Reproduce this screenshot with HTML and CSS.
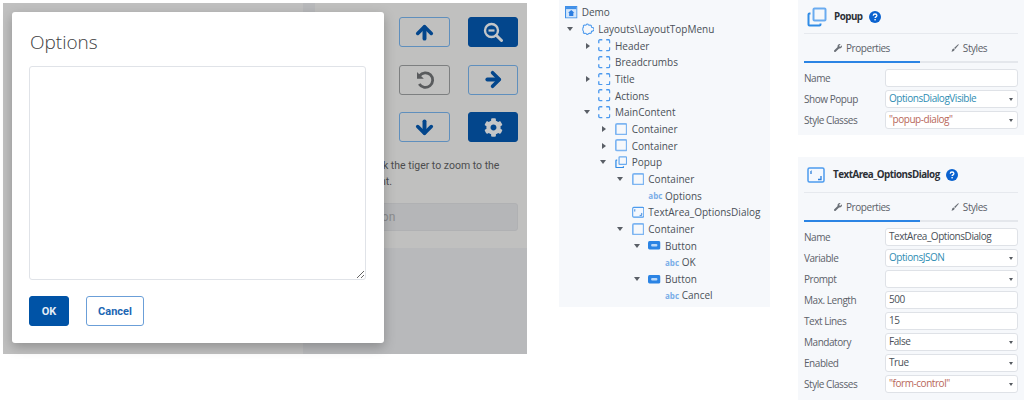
FILE: index.html
```html
<!DOCTYPE html>
<html lang="en">
  <head>
    <meta charset="UTF-8" />
    <title>Options dialog</title>
    <link rel="stylesheet" href="styles.css">
  </head>
  <body>
    <svg class="defs" width="0" height="0">
      <symbol id="arrow" viewBox="0 0 20 18"><path d="M2.800 10 10 2.800 17.200 10" fill="none" stroke="currentColor" stroke-width="3.800" stroke-linecap="round" stroke-linejoin="round"/><path d="M10 3.500V15.500" fill="none" stroke="currentColor" stroke-width="4.200" stroke-linecap="round"/></symbol>
      <symbol id="cog" viewBox="0 0 512 512"><path d="M487.4 315.7l-42.6-24.6c4.3-23.2 4.3-47 0-70.2l42.6-24.6c4.9-2.8 7.1-8.6 5.5-14-11.1-35.6-30-67.8-54.7-94.6-3.8-4.1-10-5.1-14.8-2.3L380.8 110c-17.9-15.4-38.5-27.3-60.8-35.1V25.8c0-5.6-3.9-10.5-9.4-11.7-36.7-8.2-74.3-7.8-109.2 0-5.5 1.2-9.4 6.1-9.4 11.7V75c-22.2 7.9-42.8 19.8-60.8 35.1L88.7 85.5c-4.9-2.8-11-1.9-14.8 2.3-24.7 26.7-43.6 58.9-54.7 94.6-1.7 5.4.6 11.2 5.5 14L67.3 221c-4.3 23.2-4.3 47 0 70.2l-42.6 24.6c-4.9 2.8-7.1 8.6-5.5 14 11.1 35.6 30 67.8 54.7 94.6 3.8 4.1 10 5.1 14.8 2.3l42.6-24.6c17.9 15.4 38.5 27.3 60.8 35.1v49.2c0 5.6 3.9 10.5 9.4 11.7 36.7 8.2 74.3 7.8 109.2 0 5.5-1.2 9.4-6.1 9.4-11.7v-49.2c22.2-7.9 42.8-19.8 60.8-35.1l42.6 24.6c4.9 2.8 11 1.9 14.8-2.3 24.7-26.7 43.6-58.9 54.7-94.6 1.5-5.5-.7-11.3-5.6-14.1zM256 336c-44.1 0-80-35.9-80-80s35.9-80 80-80 80 35.9 80 80-35.9 80-80 80z"/></symbol>
      <symbol id="wrench" viewBox="0 0 512 512"><path d="M507.73 109.1c-2.24-9.03-13.54-12.09-20.12-5.51l-74.36 74.36-67.88-11.31-11.31-67.88 74.36-74.36c6.62-6.62 3.43-17.9-5.66-20.16-47.38-11.74-99.55.91-136.58 37.93-39.64 39.64-50.55 97.1-34.05 147.2L18.74 402.76c-24.99 24.99-24.99 65.51 0 90.5 24.99 24.99 65.51 24.99 90.5 0l213.21-213.21c50.12 16.71 107.47 5.68 147.37-34.22 37.07-37.07 49.7-89.32 37.91-136.73z"/></symbol>
      <symbol id="brush" viewBox="0 0 12 12"><path d="M11.500 .5c.3.3 0 .9-.4 1.300L6.300 7.600 4.600 6 10.300 .9c.4-.4.9-.7 1.200-.4zM4 6.600l1.600 1.600C5.400 10 3.200 11.300 .5 11.300c.9-.8 1-1.500 1.200-2.500C1.900 7.500 3 6.700 4 6.600z"/></symbol>
      <symbol id="ic-page" viewBox="0 0 12 12"><rect x=".5" y=".5" width="11" height="11" fill="#d3e6fb" stroke="#3f8fe8"/><rect x="1" y="1" width="10" height="2" fill="#3f8fe8"/><path d="M6 3.800 9 6.500H8V9.500H4V6.500H3z" fill="#2a7de1"/></symbol>
      <symbol id="ic-layout" viewBox="0 0 13 12"><path d="M4.300 1.600c.5-1.300 2-1.300 2.400 0 .2.400 2.300-.2 2.800.3.500.5.100 1.900.4 2.100 1.300-.2 2.600.8 2.600 2s-1.300 2.200-2.600 2c-.3.2.1 1.600-.4 2.100-.5.500-2.600-.1-2.800.3-.4 1.300-1.900 1.300-2.400 0-.2-.4-2.200.2-2.700-.3-.5-.5.100-1.800-.1-2.100-1-.4-1-3.500 0-4 .2-.3-.4-1.600.1-2.100.5-.5 2.500.1 2.700-.3z" fill="none" stroke="#4d9aee" stroke-width="1.100"/></symbol>
      <symbol id="ic-block" viewBox="0 0 13 13"><path d="M.8 4.500V2A1.200 1.200 0 0 1 2 .8H4.500M8.500 .8H11A1.200 1.200 0 0 1 12.200 2V4.500M12.200 8.500V11A1.200 1.200 0 0 1 11 12.200H8.500M4.500 12.200H2A1.200 1.200 0 0 1 .8 11V8.500" fill="none" stroke="#4d9aee" stroke-width="1.400"/></symbol>
      <symbol id="ic-box" viewBox="0 0 12 12"><rect x=".8" y=".8" width="10.400" height="10.400" rx="1.200" fill="none" stroke="#7db5f2" stroke-width="1.600"/></symbol>
      <symbol id="ic-popup" viewBox="0 0 20 20"><path d="M7.500 1.500h10a1 1 0 0 1 1 1v10a1 1 0 0 1-1 1h-10a1 1 0 0 1-1-1v-10a1 1 0 0 1 1-1z" fill="none" stroke="#6aabf0" stroke-width="2"/><path d="M3.500 6.500h-1a1 1 0 0 0-1 1v10a1 1 0 0 0 1 1h10a1 1 0 0 0 1-1v-1" fill="none" stroke="#2f8be6" stroke-width="2"/></symbol>
      <symbol id="ic-area" viewBox="0 0 18 16"><rect x="1" y="1" width="16" height="14" rx="1.500" fill="#f4f8fe" stroke="#4c9bee" stroke-width="1.500"/><path d="M4 4v3M14 9v3.500h-3M4 4h.5" fill="none" stroke="#2f7fda" stroke-width="1.300"/></symbol>
      <symbol id="ic-button" viewBox="0 0 12 8"><rect width="12" height="8" rx="1.500" fill="#2b84e4"/><rect x="3" y="2.800" width="6" height="2.400" rx="1" fill="#bcd9f8"/></symbol>
      <symbol id="ic-help" viewBox="0 0 12 12"><circle cx="6" cy="6" r="6" fill="#0a62cf"/><path d="M4.200 4.600C4.300 3.500 5 3 6 3c1.100 0 1.900.6 1.900 1.500 0 1.400-1.800 1.300-1.800 2.600" fill="none" stroke="#fff" stroke-width="1.300"/><rect x="5.400" y="8" width="1.400" height="1.400" fill="#fff"/></symbol>
    </svg>

    <div class="page">
      <div class="demo">
        <div class="demo-side"></div>
        <div class="demo-main">
          <div class="demo-card">
            <div class="ctrl-grid">
              <button class="ctrl"><svg class="ico"><use href="#arrow"/></svg></button>
              <button class="ctrl solid">
                <svg class="ico zoomout" viewBox="0 0 20 20"><circle cx="8.500" cy="8.500" r="6.500" fill="none" stroke="currentColor" stroke-width="2.400"/><path d="M5.500 8.500h6" stroke="currentColor" stroke-width="2.200"/><path d="M13.500 13.500l5 5" stroke="currentColor" stroke-width="3" stroke-linecap="round"/></svg>
              </button>
              <button class="ctrl grey">
                <svg class="ico zoomout" viewBox="0 0 20 20"><path d="M4.600 5.600A7.300 7.300 0 1 1 4.200 14" fill="none" stroke="currentColor" stroke-width="2.800"/><path d="M2 2v6.800h6.800z" fill="currentColor"/></svg>
              </button>
              <button class="ctrl"><svg class="ico right"><use href="#arrow"/></svg></button>
              <button class="ctrl"><svg class="ico down"><use href="#arrow"/></svg></button>
              <button class="ctrl solid"><svg class="ico cog"><use href="#cog"/></svg></button>
            </div>
            <p class="hint">Click the tiger to zoom to the point.</p>
            <div class="fake-input">Option</div>
          </div>
        </div>

        <div class="dialog">
          <h2>Options</h2>
          <textarea class="dialog-text"></textarea>
          <div class="dialog-btns">
            <button class="btn btn-primary">OK</button>
            <button class="btn">Cancel</button>
          </div>
        </div>
      </div>

      <div class="tree">
        <div class="node l0"><svg class="ti"><use href="#ic-page"/></svg>Demo</div>
        <div class="node l1"><i class="tw open"></i><svg class="ti"><use href="#ic-layout"/></svg>Layouts\LayoutTopMenu</div>
        <div class="node l2"><i class="tw"></i><svg class="ti"><use href="#ic-block"/></svg>Header</div>
        <div class="node l2"><i class="tw none"></i><svg class="ti"><use href="#ic-block"/></svg>Breadcrumbs</div>
        <div class="node l2"><i class="tw"></i><svg class="ti"><use href="#ic-block"/></svg>Title</div>
        <div class="node l2"><i class="tw none"></i><svg class="ti"><use href="#ic-block"/></svg>Actions</div>
        <div class="node l2"><i class="tw open"></i><svg class="ti"><use href="#ic-block"/></svg>MainContent</div>
        <div class="node l3"><i class="tw"></i><svg class="ti"><use href="#ic-box"/></svg>Container</div>
        <div class="node l3"><i class="tw"></i><svg class="ti"><use href="#ic-box"/></svg>Container</div>
        <div class="node l3"><i class="tw open"></i><svg class="ti"><use href="#ic-popup"/></svg>Popup</div>
        <div class="node l4"><i class="tw open"></i><svg class="ti"><use href="#ic-box"/></svg>Container</div>
        <div class="node l5"><i class="tw none"></i><span class="abc">abc</span>Options</div>
        <div class="node l4"><i class="tw none"></i><svg class="ti"><use href="#ic-area"/></svg>TextArea_OptionsDialog</div>
        <div class="node l4"><i class="tw open"></i><svg class="ti"><use href="#ic-box"/></svg>Container</div>
        <div class="node l5"><i class="tw open"></i><svg class="ti"><use href="#ic-button"/></svg>Button</div>
        <div class="node l6"><i class="tw none"></i><span class="abc">abc</span>OK</div>
        <div class="node l5"><i class="tw open"></i><svg class="ti"><use href="#ic-button"/></svg>Button</div>
        <div class="node l6"><i class="tw none"></i><span class="abc">abc</span>Cancel</div>
      </div>

      <div class="props">
        <div class="panel panel-popup">
          <div class="panel-head">
            <svg class="head-ico"><use href="#ic-popup"/></svg>
            <span class="panel-title">Popup</span>
            <svg class="help"><use href="#ic-help"/></svg>
          </div>
          <div class="tabs">
            <div class="tab active"><svg class="tab-ico"><use href="#wrench"/></svg>Properties</div>
            <div class="tab"><svg class="tab-ico"><use href="#brush"/></svg>Styles</div>
          </div>
          <div class="row"><label>Name</label><div class="field"></div></div>
          <div class="row"><label>Show Popup</label><div class="field select var">OptionsDialogVisible</div></div>
          <div class="row"><label>Style Classes</label><div class="field select str">"popup-dialog"</div></div>
        </div>

        <div class="panel panel-area">
          <div class="panel-head">
            <svg class="head-ico area"><use href="#ic-area"/></svg>
            <span class="panel-title">TextArea_OptionsDialog</span>
            <svg class="help"><use href="#ic-help"/></svg>
          </div>
          <div class="tabs">
            <div class="tab active"><svg class="tab-ico"><use href="#wrench"/></svg>Properties</div>
            <div class="tab"><svg class="tab-ico"><use href="#brush"/></svg>Styles</div>
          </div>
          <div class="row"><label>Name</label><div class="field">TextArea_OptionsDialog</div></div>
          <div class="row"><label>Variable</label><div class="field select var">OptionsJSON</div></div>
          <div class="row"><label>Prompt</label><div class="field select"></div></div>
          <div class="row"><label>Max. Length</label><div class="field">500</div></div>
          <div class="row"><label>Text Lines</label><div class="field">15</div></div>
          <div class="row"><label>Mandatory</label><div class="field select">False</div></div>
          <div class="row"><label>Enabled</label><div class="field select">True</div></div>
          <div class="row"><label>Style Classes</label><div class="field select str">"form-control"</div></div>
        </div>
      </div>
    </div>
  </body>
</html>
```

FILE: styles.css
```css
html,
body {
  margin: 0;
  background: #fff;
}
.defs {
  position: absolute;
}
.page {
  display: flex;
  width: 1024px;
  height: 400px;
  overflow: hidden;
}

/* left: screenshot of the running app with the dialog open */
.demo {
  position: relative;
  display: flex;
  flex: none;
  width: 524px;
  height: 351px;
  margin: 3px 0 0 3px;
  background: #c0c0c0;
  font-family: Roboto, sans-serif;
}
.demo-side {
  width: 300px;
}
.demo-main {
  flex: 1;
  padding-left: 12px;
  background: #b8b9bb;
}
.demo-card {
  display: flex;
  flex-direction: column;
  box-sizing: border-box;
  height: 245px;
  padding: 14px 9px 0 38px;
  background: #c0c0bf;
}
.ctrl-grid {
  display: grid;
  grid-template-columns: 51px 50px;
  grid-auto-rows: 30px;
  justify-content: end;
  column-gap: 18px;
  row-gap: 17.5px;
}
.ctrl {
  display: flex;
  align-items: center;
  justify-content: center;
  padding: 0;
  border: 1px solid #5f8fbd;
  border-radius: 3px;
  background: transparent;
  color: #03468c;
  fill: currentColor;
}
.ctrl.solid {
  border-color: #03468c;
  background: #03468c;
  color: #c4c6c8;
}
.ctrl.grey {
  border-color: #7d7f80;
  color: #595b5d;
}
.ico {
  width: 19px;
  height: 17px;
}
.ico.zoomout {
  width: 20px;
  height: 20px;
}
.ico.cog {
  width: 19px;
  height: 19px;
}
.ico.right {
  transform: rotate(90deg);
}
.ico.down {
  transform: rotate(180deg);
}
.hint {
  margin: 16px 0 0 12.5px;
  font-size: 10.5px;
  line-height: 16px;
  color: #4c4d4e;
}
.fake-input {
  margin-top: 13px;
  height: 28px;
  padding-left: 6px;
  border-radius: 3px;
  background: #b5b6b8;
  border: 1px solid #b0b1b3;
  box-sizing: border-box;
  font-size: 12px;
  line-height: 26px;
  color: #8b8c8e;
}
.dialog {
  position: absolute;
  left: 9px;
  top: 9px;
  display: flex;
  flex-direction: column;
  box-sizing: border-box;
  width: 372px;
  height: 331px;
  padding: 18px 17px 0;
  border-radius: 3px;
  background: #fff;
  box-shadow: 0 4px 12px rgba(0, 0, 0, 0.25);
}
.dialog h2 {
  margin: 0;
  padding-left: 1px;
  height: 36px;
  font-family: "Open Sans", sans-serif;
  font-size: 19px;
  font-weight: 300;
  line-height: 24px;
  color: #3c3d3e;
}
.dialog-text {
  display: block;
  box-sizing: border-box;
  width: 337px;
  height: 214px;
  margin: 0;
  border: 1px solid #e0e3e8;
  border-radius: 3px;
  background: #fff;
}
.dialog-btns {
  display: flex;
  gap: 17px;
  margin-top: 16px;
}
.btn {
  width: 58px;
  height: 30px;
  padding: 0;
  border: 1px solid #6b9fd8;
  border-radius: 3px;
  background: #fff;
  font-family: Roboto, sans-serif;
  font-size: 11px;
  font-weight: 700;
  color: #1b66b3;
}
.btn-primary {
  width: 40px;
  border-color: #0053a6;
  background: #0053a6;
  color: #e4edf6;
}

/* middle: widget tree */
.tree {
  flex: none;
  box-sizing: border-box;
  width: 211px;
  height: 307px;
  margin-left: 32px;
  padding: 4px 0 0 6px;
  background: #f6f8fb;
  font-family: "Open Sans", sans-serif;
  font-size: 10px;
  color: #4a5058;
}
.node {
  display: flex;
  align-items: center;
  height: 16.67px;
  white-space: nowrap;
}
.l2 { padding-left: 16.67px; }
.l3 { padding-left: 33.34px; }
.l4 { padding-left: 50px; }
.l5 { padding-left: 66.68px; }
.l6 { padding-left: 83.35px; }
.tw {
  position: relative;
  flex: none;
  width: 16.67px;
  height: 8px;
}
.tw::before {
  content: "";
  position: absolute;
  left: 4px;
  top: 1px;
  border-style: solid;
  border-width: 3px 0 3px 4px;
  border-color: transparent transparent transparent #5a5f66;
}
.tw.open::before {
  left: 2px;
  top: 2px;
  border-width: 4px 3px 0 3px;
  border-color: #5a5f66 transparent transparent transparent;
}
.tw.none::before {
  display: none;
}
.ti {
  flex: none;
  width: 12.5px;
  height: 12.5px;
  margin-right: 4.17px;
}
.abc {
  flex: none;
  width: 16.67px;
  font-size: 8px;
  font-weight: 700;
  color: #7aaee8;
}

/* right: property panels, the source image is squeezed sideways */
.props {
  flex: none;
  display: flex;
  flex-direction: column;
  gap: 22px;
  width: 226px;
  margin-left: 28px;
  font-family: "Open Sans", sans-serif;
  font-size: 10px;
  letter-spacing: -0.45px;
}
.panel {
  box-sizing: border-box;
  padding: 0 6px;
  background: #f6f8fb;
}
.panel-popup {
  height: 135px;
}
.panel-area {
  height: 243px;
}
.panel-head {
  display: flex;
  align-items: center;
  box-sizing: border-box;
  height: 34px;
  padding-left: 3px;
  border-bottom: 1px solid #e6e9ee;
}
.panel-area .panel-head {
  height: 36px;
}
.head-ico {
  width: 20px;
  height: 20px;
  margin-right: 7px;
}
.head-ico.area {
  width: 18px;
  height: 16px;
  margin-right: 8px;
}
.panel-title {
  font-size: 9.8px;
  font-weight: 700;
  letter-spacing: -0.5px;
  color: #2c3036;
}
.help {
  width: 12px;
  height: 12px;
  margin-left: 6px;
}
.tabs {
  display: flex;
  box-sizing: border-box;
  height: 29px;
  margin-bottom: 6px;
  border-bottom: 2px solid #e4e7ec;
}
.tab {
  display: flex;
  flex: 1;
  align-items: center;
  justify-content: center;
  height: 29px;
  box-sizing: border-box;
  border-bottom: 2px solid transparent;
  color: #5c6169;
}
.tab.active {
  flex: none;
  width: 116px;
  border-bottom-color: #2b84e4;
}
.tab-ico {
  width: 8px;
  height: 8px;
  margin-right: 4px;
  fill: #6b7077;
}
.row {
  display: flex;
  align-items: center;
  height: 18px;
  margin-bottom: 3px;
}
.row label {
  flex: none;
  width: 81px;
  color: #5c6169;
}
.field {
  position: relative;
  flex: none;
  box-sizing: border-box;
  width: 133px;
  height: 18px;
  padding-left: 3px;
  border: 1px solid #dfe2e7;
  border-radius: 3px;
  background: #fff;
  line-height: 15px;
  color: #4a5058;
}
.field.select::after {
  content: "";
  position: absolute;
  right: 4px;
  top: 7px;
  border-style: solid;
  border-width: 3px 2px 0 2px;
  border-color: #555a60 transparent transparent transparent;
}
.var {
  color: #2f8db3;
}
.str {
  color: #b8675a;
}
```
